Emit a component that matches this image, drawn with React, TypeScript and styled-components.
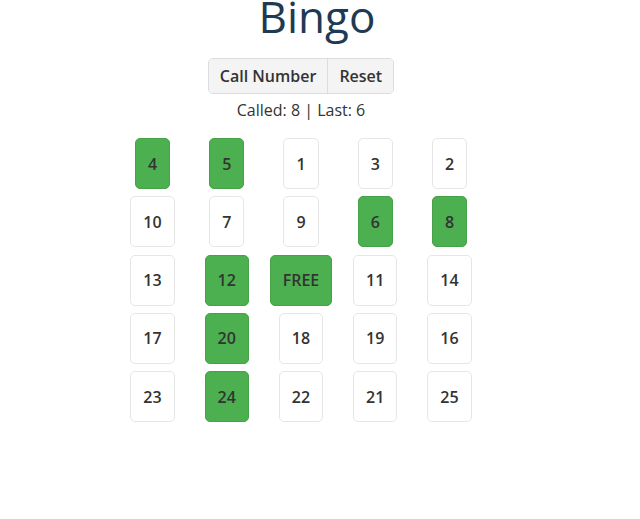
import * as React from 'react'
import styled, { createGlobalStyle } from 'styled-components'

const GlobalStyle = createGlobalStyle`
  body {
    margin: 0;
    background: #ffffff;
    font-family: 'Open Sans', 'Liberation Sans', sans-serif;
    color: #333333;
  }
`

const Page = styled.div`
  width: 640px;
`

const Title = styled.h1`
  width: 634px;
  margin: 0 0 26px;
  font-size: 44px;
  font-weight: 400;
  line-height: 32px;
  text-align: center;
  color: #1f3a52;
`

const Main = styled.div`
  width: 602px;
  display: flex;
  flex-direction: column;
  align-items: center;
`

const ButtonGroup = styled.div`
  display: flex;
  height: 36px;
  border: 1px solid #dcdcdc;
  border-radius: 5px;
  overflow: hidden;
  box-sizing: border-box;
  background: #f4f4f4;
`

const Button = styled.button`
  font-family: inherit;
  font-size: 16px;
  font-weight: 600;
  color: #333333;
  background: #f4f4f4;
  border: none;
  padding: 0 11px;
  cursor: pointer;

  & + & {
    border-left: 1px solid #dcdcdc;
  }
`

const Status = styled.div`
  margin: 4px 0 16px;
  font-size: 16px;
  line-height: 24px;
`

const Board = styled.div`
  display: grid;
  grid-template-columns: repeat(5, 74.25px);
  grid-auto-rows: 51px;
  row-gap: 7.25px;
  justify-items: center;
`

const Cell = styled.div<{ $marked: boolean }>`
  box-sizing: border-box;
  height: 51px;
  padding: 0 12px;
  display: flex;
  align-items: center;
  justify-content: center;
  font-size: 16px;
  font-weight: 600;
  color: #333333;
  background: ${p => (p.$marked ? '#4caf50' : '#ffffff')};
  border: 1px solid ${p => (p.$marked ? '#45a249' : '#e6e6e6')};
  border-radius: 5px;
`

const board: (number | 'FREE')[][] = [
  [4, 5, 1, 3, 2],
  [10, 7, 9, 6, 8],
  [13, 12, 'FREE', 11, 14],
  [17, 20, 18, 19, 16],
  [23, 24, 22, 21, 25],
]

const initialCalls = [5, 4, 12, 20, 24, 8, 6]

export default function App() {
  const [calls, setCalls] = React.useState<number[]>(initialCalls)
  const [count, setCount] = React.useState(8)
  const marked = new Set<number | 'FREE'>(['FREE', ...calls])
  const last = calls.length ? calls[calls.length - 1] : '-'

  return (
    <Page>
      <GlobalStyle />
      <Title>Bingo</Title>
      <Main>
        <ButtonGroup>
          <Button onClick={() => setCount(c => c + 1)}>Call Number</Button>
          <Button
            onClick={() => {
              setCount(0)
              setCalls([])
            }}
          >
            Reset
          </Button>
        </ButtonGroup>
        <Status>
          Called: {count} | Last: {last}
        </Status>
        <Board>
          {board.flat().map((v, i) => (
            <Cell key={i} $marked={marked.has(v)}>
              {v}
            </Cell>
          ))}
        </Board>
      </Main>
    </Page>
  )
}
